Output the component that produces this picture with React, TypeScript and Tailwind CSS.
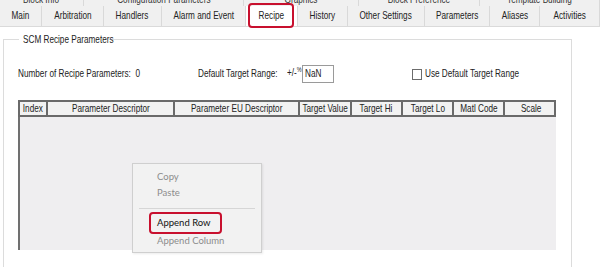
import React from "react";

const sans = { fontFamily: '"Liberation Sans", Arial, sans-serif' };

function T({ children, left = false, className = "" }: { children: React.ReactNode; left?: boolean; className?: string }) {
  return (
    <span
      className={
        "inline-block whitespace-nowrap scale-x-[0.78] " + (left ? "origin-left " : "origin-center ") + className
      }
    >
      {children}
    </span>
  );
}

const topTabs = [
  { label: "Block Info", w: 84 },
  { label: "Configuration Parameters", w: 160 },
  { label: "Graphics", w: 115 },
  { label: "Block Preference", w: 121 },
  { label: "Template Building", w: 120 },
];

const tabs = [
  { label: "Main", w: 42 },
  { label: "Arbitration", w: 62 },
  { label: "Handlers", w: 58 },
  { label: "Alarm and Event", w: 84 },
  { label: "Recipe", w: 52, active: true },
  { label: "History", w: 50 },
  { label: "Other Settings", w: 77 },
  { label: "Parameters", w: 65 },
  { label: "Aliases", w: 50 },
  { label: "Activities", w: 60 },
];

const cols = [
  { label: "Index", w: 28 },
  { label: "Parameter Descriptor", w: 127 },
  { label: "Parameter EU Descriptor", w: 125 },
  { label: "Target Value", w: 52 },
  { label: "Target Hi", w: 51 },
  { label: "Target Lo", w: 51 },
  { label: "Matl Code", w: 51 },
  { label: "Scale", w: 52 },
];

export default function App() {
  return (
    <div className="relative w-[600px] h-[267px] overflow-hidden bg-white text-[10.5px] text-[#222]" style={sans}>
      {/* partial top tab row */}
      <div className="flex h-[6px] overflow-hidden bg-[#f0f0f0]">
        {topTabs.map((t) => (
          <div key={t.label} className="flex justify-center border-r border-[#d9d9d9] shrink-0" style={{ width: t.w }}>
            <span className="-mt-[6px] leading-[11px] text-[#333]">
              <T>{t.label}</T>
            </span>
          </div>
        ))}
      </div>
      {/* main tab row */}
      <div className="flex h-[21px] bg-[#f0f0f0] border-b border-[#dadada]">
        {tabs.map((t) => (
          <div
            key={t.label}
            className={
              "flex items-center justify-center shrink-0 border-r border-[#d9d9d9] " +
              (t.active ? "bg-white" : "")
            }
            style={{ width: t.w }}
          >
            <T>{t.label}</T>
          </div>
        ))}
      </div>
      {/* red highlight around Recipe tab */}
      <div className="absolute left-[248px] top-[3px] w-[46px] h-[25px] rounded-[4px] border-2 border-[#c8102e]" />

      {/* group box */}
      <fieldset className="ml-[3px] mt-[6px] w-[569px] h-[260px] border border-[#dcdcdc] pl-[14px]">
        <legend className="ml-[1px] pl-[4px] w-[90px] text-[#222] leading-[12px]">
          <T left>SCM Recipe Parameters</T>
        </legend>
        <div className="flex items-center h-[18px] mt-[20px]">
          <div className="w-[180px] shrink-0">
            <T left>Number of Recipe Parameters:&nbsp; 0</T>
          </div>
          <div className="w-[89px] shrink-0">
            <T left>Default Target Range:</T>
          </div>
          <div className="w-[15px] shrink-0 -mt-[3px]">
            <T left>
              +/-<sup className="text-[7px]">%</sup>
            </T>
          </div>
          <div className="w-[32px] h-[18px] border border-[#9a9a9a] flex items-center pl-[2px] shrink-0">
            <T left>NaN</T>
          </div>
          <div className="ml-[78px] w-[10px] h-[11px] border border-[#6c6c6c] shrink-0" />
          <div className="ml-[3px]">
            <T left>Use Default Target Range</T>
          </div>
        </div>
        {/* table */}
        <div className="mt-[17px] w-[538px] h-[150px] bg-[#efeef0] border-l-2 border-[#707070]">
          <div className="flex h-[17px] bg-[#f2f2f2] border-2 border-[#6a6a6a] -ml-[2px]">
            {cols.map((c, i) => (
              <div
                key={c.label}
                className={
                  "flex items-center justify-center shrink-0 " +
                  (i < cols.length - 1 ? "border-r-2 border-[#6a6a6a]" : "")
                }
                style={{ width: c.w }}
              >
                <T>{c.label}</T>
              </div>
            ))}
          </div>
        </div>
      </fieldset>

      {/* context menu */}
      <div
        className="absolute left-[132px] top-[163px] w-[130px] h-[90px] bg-[#f2f2f2] border border-[#cfcfcf] shadow-[1px_1px_2px_rgba(0,0,0,0.08)] text-[9.5px]"
        style={{ fontFamily: 'Lato, "Open Sans", sans-serif' }}
      >
        <div className="pl-[24px] pt-[5px] h-[19px] leading-[16px] text-[#8c8c8c]">Copy</div>
        <div className="pl-[24px] h-[19px] leading-[19px] text-[#8c8c8c]">Paste</div>
        <div className="mx-[6px] mt-[6px] border-t border-[#d6d6d6]" />
        <div className="relative pl-[24px] mt-[5px] h-[18px] leading-[18px] text-[#111]">
          Append Row
          <div className="absolute left-[16px] -top-[2px] w-[73px] h-[22px] rounded-[4px] border-2 border-[#c8102e]" />
        </div>
        <div className="pl-[24px] h-[18px] leading-[18px] text-[#8c8c8c]">Append Column</div>
      </div>
    </div>
  );
}
